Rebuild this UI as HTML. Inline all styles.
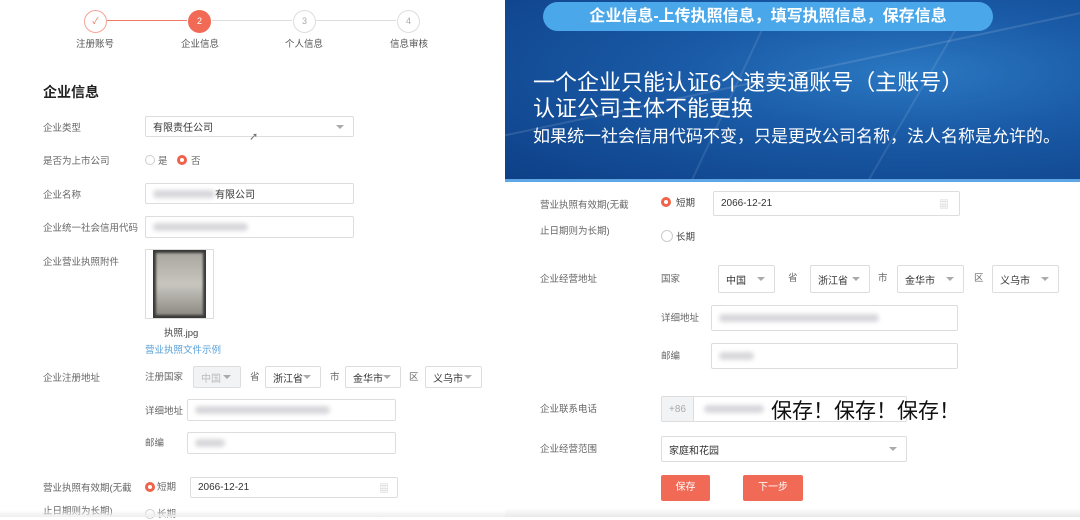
<!DOCTYPE html>
<html><head><meta charset="utf-8"><style>
*{margin:0;padding:0;box-sizing:border-box}
body{width:1080px;height:517px;overflow:hidden;background:#fff;position:relative;font-family:"Liberation Sans","Noto Sans CJK SC",sans-serif;color:#555;font-size:10px}
.a{position:absolute;white-space:nowrap}
.l{position:absolute;white-space:nowrap;font-size:9.5px;color:#666;transform:translateY(-50%)}
.in{position:absolute;border:1px solid #ddd;border-radius:2px;background:#fff;font-size:10px;color:#333;display:flex;align-items:center;padding-left:7px}
.blur{display:inline-block;height:8px;background:#d8d8dc;border-radius:4px;filter:blur(2px)}
.sel::after{content:"";position:absolute;right:9px;top:50%;margin-top:-2px;border:4px solid transparent;border-top:4px solid #aaa;border-bottom:0}
.rad{position:absolute;width:10px;height:10px;border-radius:50%;border:1px solid #ccc;background:#fff}
.rad.on{border:3px solid #f0624a}
.circ{position:absolute;width:23px;height:23px;border-radius:50%;border:1px solid #ddd;color:#aaa;font-size:9px;text-align:center;line-height:21px;background:#fff}
.step{position:absolute;top:36px;font-size:9.5px;color:#555;transform:translateX(-50%)}
.btn{position:absolute;background:#f06a55;color:#fff;font-size:10px;text-align:center;border-radius:2px}
</style></head><body>
<!-- left steps -->
<div class="a" style="left:107px;top:20px;width:80px;height:1px;background:#f07a66"></div>
<div class="a" style="left:212px;top:20px;width:80px;height:1px;background:#ddd"></div>
<div class="a" style="left:316px;top:20px;width:80px;height:1px;background:#ddd"></div>
<div class="circ" style="left:84px;top:10px;border-color:#f3a496;color:#f06a55">✓</div>
<div class="circ" style="left:188px;top:10px;background:#f06a55;border-color:#f06a55;color:#fff">2</div>
<div class="circ" style="left:293px;top:10px">3</div>
<div class="circ" style="left:397px;top:10px">4</div>
<div class="step" style="left:95px">注册账号</div>
<div class="step" style="left:200px">企业信息</div>
<div class="step" style="left:304px">个人信息</div>
<div class="step" style="left:409px">信息审核</div>

<div class="a" style="left:43px;top:82px;font-size:14px;font-weight:bold;color:#222">企业信息</div>
<div class="l" style="left:43px;top:127px">企业类型</div>
<div class="in sel" style="left:145px;top:116px;width:209px;height:21px">有限责任公司</div>
<div class="a" style="left:249px;top:130px;font-size:11px;color:#777">➚</div>
<div class="l" style="left:43px;top:160px">是否为上市公司</div>
<div class="rad" style="left:145px;top:155px"></div><div class="l" style="left:158px;top:160px">是</div>
<div class="rad on" style="left:177px;top:155px"></div><div class="l" style="left:191px;top:160px">否</div>
<div class="l" style="left:43px;top:194px">企业名称</div>
<div class="in" style="left:145px;top:183px;width:209px;height:21px"><span class="blur" style="width:62px"></span>有限公司</div>
<div class="l" style="left:43px;top:227px">企业统一社会信用代码</div>
<div class="in" style="left:145px;top:216px;width:209px;height:22px"><span class="blur" style="width:95px"></span></div>
<div class="l" style="left:43px;top:261px">企业营业执照附件</div>
<div class="a" style="left:145px;top:249px;width:69px;height:70px;border:1px solid #ddd;background:#fff"></div>
<div class="a" style="left:153px;top:250px;width:53px;height:68px;background:#3a3a38;padding:3px"><div style="width:100%;height:100%;background:linear-gradient(#a9a69f,#c9c6c0 50%,#8e8a84);filter:blur(1px)"></div></div>
<div class="a" style="left:164px;top:325px;font-size:9.5px;color:#444">执照.jpg</div>
<div class="a" style="left:145px;top:342px;font-size:9.5px;color:#5aa2d8">营业执照文件示例</div>
<div class="l" style="left:43px;top:377px">企业注册地址</div>
<div class="l" style="left:145px;top:376px">注册国家</div>
<div class="in sel" style="left:193px;top:366px;width:48px;height:22px;background:#f2f3f5;color:#bbb">中国</div>
<div class="l" style="left:250px;top:376px">省</div>
<div class="in sel" style="left:265px;top:366px;width:56px;height:22px">浙江省</div>
<div class="l" style="left:330px;top:376px">市</div>
<div class="in sel" style="left:345px;top:366px;width:56px;height:22px">金华市</div>
<div class="l" style="left:409px;top:376px">区</div>
<div class="in sel" style="left:425px;top:366px;width:57px;height:22px">义乌市</div>
<div class="l" style="left:145px;top:410px">详细地址</div>
<div class="in" style="left:187px;top:399px;width:209px;height:22px"><span class="blur" style="width:135px"></span></div>
<div class="l" style="left:145px;top:442px">邮编</div>
<div class="in" style="left:187px;top:432px;width:209px;height:22px"><span class="blur" style="width:30px"></span></div>
<div class="l" style="left:43px;top:487px">营业执照有效期(无截</div>
<div class="rad on" style="left:145px;top:482px"></div><div class="l" style="left:157px;top:486px">短期</div>
<div class="in" style="left:190px;top:477px;width:208px;height:21px">2066-12-21<span style="position:absolute;right:8px;color:#ccc">▦</span></div>
<div class="l" style="left:43px;top:510px">止日期则为长期)</div>
<div class="rad" style="left:145px;top:509px"></div><div class="l" style="left:157px;top:513px">长期</div>
<div class="a" style="left:0;top:510px;width:505px;height:7px;background:linear-gradient(rgba(240,240,240,0),#eee)"></div>

<!-- right banner -->
<div class="a" style="left:505px;top:0;width:575px;height:182px;background:radial-gradient(ellipse at 70% 40%,#2b78c2 0%,#1a5aa6 40%,#0d3f86 100%);overflow:hidden">
<div style="position:absolute;left:-100px;top:60px;width:900px;height:2px;background:rgba(255,255,255,.12);transform:rotate(-12deg)"></div>
<div style="position:absolute;left:200px;top:0;width:2px;height:300px;background:rgba(255,255,255,.1);transform:rotate(25deg)"></div>
<div style="position:absolute;left:380px;top:0;width:2px;height:300px;background:rgba(255,255,255,.1);transform:rotate(30deg)"></div>
<div style="position:absolute;left:0;bottom:0;width:100%;height:3px;background:#5fa6e6"></div>
</div>
<div class="a" style="left:543px;top:2px;width:450px;height:29px;border-radius:15px;background:#4aa8ea;color:#fff;font-size:16px;font-weight:bold;text-align:center;line-height:29px">企业信息-上传执照信息，填写执照信息，保存信息</div>
<div class="a" style="left:533px;top:70px;font-size:22px;color:#fff;line-height:26px">一个企业只能认证6个速卖通账号（主账号）<br>认证公司主体不能更换</div>
<div class="a" style="left:533px;top:122px;font-size:17px;color:#fff">如果统一社会信用代码不变，只是更改公司名称，法人名称是允许的。</div>

<!-- right form -->
<div class="l" style="left:540px;top:204px">营业执照有效期(无截</div>
<div class="rad on" style="left:661px;top:197px"></div><div class="l" style="left:676px;top:202px;color:#444">短期</div>
<div class="in" style="left:713px;top:191px;width:247px;height:25px">2066-12-21<span style="position:absolute;right:10px;color:#ccc">▦</span></div>
<div class="l" style="left:540px;top:230px">止日期则为长期)</div>
<div class="rad" style="left:661px;top:230px;width:12px;height:12px"></div><div class="l" style="left:676px;top:236px;color:#444">长期</div>
<div class="l" style="left:540px;top:278px">企业经营地址</div>
<div class="l" style="left:661px;top:278px">国家</div>
<div class="in sel" style="left:718px;top:265px;width:57px;height:28px">中国</div>
<div class="l" style="left:788px;top:277px">省</div>
<div class="in sel" style="left:810px;top:265px;width:60px;height:28px">浙江省</div>
<div class="l" style="left:878px;top:277px">市</div>
<div class="in sel" style="left:897px;top:265px;width:67px;height:28px">金华市</div>
<div class="l" style="left:974px;top:277px">区</div>
<div class="in sel" style="left:992px;top:265px;width:67px;height:28px">义乌市</div>
<div class="l" style="left:661px;top:317px">详细地址</div>
<div class="in" style="left:711px;top:305px;width:247px;height:26px"><span class="blur" style="width:160px"></span></div>
<div class="l" style="left:661px;top:355px">邮编</div>
<div class="in" style="left:711px;top:343px;width:247px;height:26px"><span class="blur" style="width:35px"></span></div>
<div class="l" style="left:540px;top:408px">企业联系电话</div>
<div class="in" style="left:661px;top:396px;width:246px;height:26px;padding:0"><span style="width:32px;height:100%;background:#f2f3f5;border-right:1px solid #ddd;color:#aaa;display:flex;align-items:center;justify-content:center">+86</span><span class="blur" style="width:60px;margin-left:10px"></span></div>
<div class="a" style="left:771px;top:395px;font-size:21px;color:#111;background:rgba(255,255,255,.0)">保存！保存！保存！</div>
<div class="l" style="left:540px;top:448px">企业经营范围</div>
<div class="in sel" style="left:661px;top:436px;width:246px;height:26px">家庭和花园</div>
<div class="btn" style="left:661px;top:475px;width:49px;height:26px;line-height:26px">保存</div>
<div class="btn" style="left:743px;top:475px;width:60px;height:26px;line-height:26px">下一步</div>
<div class="a" style="left:505px;top:508px;width:575px;height:9px;background:linear-gradient(#fff,#e9e9e9)"></div>
</body></html>
